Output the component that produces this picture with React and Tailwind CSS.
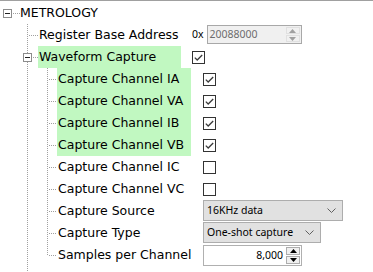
import React from 'react';

const LINE = '#a0a0a0';

function Guide({ kind }) {
  const dash = { stroke: LINE, strokeWidth: 1, strokeDasharray: '1 1', shapeRendering: 'crispEdges' };
  if (kind === 'root') {
    return (
      <svg width="20" height="22" className="shrink-0 block">
        <rect x="3.5" y="7.5" width="8" height="8" fill="#fff" stroke="#8c8c8c" shapeRendering="crispEdges" />
        <line x1="5" y1="11.5" x2="10" y2="11.5" stroke="#222" shapeRendering="crispEdges" />
        <line x1="13" y1="11.5" x2="20" y2="11.5" {...dash} />
      </svg>
    );
  }
  if (kind === 'l1') {
    return (
      <svg width="38" height="22" className="shrink-0 block">
        <line x1="27.5" y1="0" x2="27.5" y2="22" {...dash} />
        <line x1="29" y1="11.5" x2="38" y2="11.5" {...dash} />
      </svg>
    );
  }
  if (kind === 'l1open') {
    return (
      <svg width="38" height="22" className="shrink-0 block">
        <line x1="27.5" y1="0" x2="27.5" y2="7" {...dash} />
        <line x1="27.5" y1="16" x2="27.5" y2="22" {...dash} />
        <rect x="23.5" y="7.5" width="8" height="8" fill="#fff" stroke="#8c8c8c" shapeRendering="crispEdges" />
        <line x1="25" y1="11.5" x2="30" y2="11.5" stroke="#222" shapeRendering="crispEdges" />
        <line x1="33" y1="11.5" x2="38" y2="11.5" {...dash} />
      </svg>
    );
  }
  if (kind === 'l2') {
    return (
      <svg width="57" height="22" className="shrink-0 block">
        <line x1="27.5" y1="0" x2="27.5" y2="22" {...dash} />
        <line x1="47.5" y1="0" x2="47.5" y2="22" {...dash} />
        <line x1="49" y1="11.5" x2="57" y2="11.5" {...dash} />
      </svg>
    );
  }
  // l2last
  return (
    <svg width="57" height="22" className="shrink-0 block">
      <line x1="27.5" y1="0" x2="27.5" y2="22" {...dash} />
      <line x1="47.5" y1="0" x2="47.5" y2="12" {...dash} />
      <line x1="49" y1="11.5" x2="57" y2="11.5" {...dash} />
    </svg>
  );
}

function Checkbox({ checked }) {
  return (
    <div className="w-[13px] h-[13px] border border-[#333333] bg-white flex items-center justify-center shrink-0">
      {checked && (
        <svg width="11" height="11" viewBox="0 0 11 11">
          <polyline points="1.8,5.6 4.2,8 9.2,3" fill="none" stroke="#3a3a3a" strokeWidth="1.3" />
        </svg>
      )}
    </div>
  );
}

function Chevron() {
  return (
    <svg width="9" height="5" viewBox="0 0 9 5">
      <polyline points="0.5,0.5 4.5,4.5 8.5,0.5" fill="none" stroke="#606060" strokeWidth="1" />
    </svg>
  );
}

function Spinner({ disabled }) {
  const c = disabled ? '#a0a0a0' : '#000';
  return (
    <div className="flex flex-col w-[15px] h-full py-[1px] pr-[1px] gap-[1px]">
      <div className={`flex-1 flex items-center justify-center border ${disabled ? 'border-[#e0e0e0] bg-[#f0f0f0]' : 'border-[#adadad] bg-[#f0f0f0]'}`}>
        <svg width="7" height="4" viewBox="0 0 7 4"><polygon points="0,4 3.5,0 7,4" fill={c} /></svg>
      </div>
      <div className={`flex-1 flex items-center justify-center border ${disabled ? 'border-[#e0e0e0] bg-[#f0f0f0]' : 'border-[#adadad] bg-[#f0f0f0]'}`}>
        <svg width="7" height="4" viewBox="0 0 7 4"><polygon points="0,0 7,0 3.5,4" fill={c} /></svg>
      </div>
    </div>
  );
}

const labelFont = "font-['DejaVu_Sans',sans-serif] text-[12.5px] text-black";
const valFont = "font-['Noto_Sans',sans-serif] text-[10.5px]";

function Row({ kind, label, green, children, level }) {
  const w = level === 1 ? 'w-[143px]' : 'w-[134px]';
  const pad = level === 1 ? 'pl-[11px]' : 'pl-[12px]';
  return (
    <div className="flex h-[22px]">
      <Guide kind={kind} />
      <div className={`${w} shrink-0 h-full pl-[1px] leading-[22px] whitespace-nowrap overflow-hidden ${green ? 'bg-[#c1f8c1]' : ''} ${labelFont}`}>
        {label}
      </div>
      <div className={`flex h-full ${pad}`}>{children}</div>
    </div>
  );
}

export default function App() {
  return (
    <div className="w-[373px] h-[272px] bg-white border-t border-[#a0a0a0] overflow-hidden pt-[1px]">
      <div className="flex h-[22px]">
        <Guide kind="root" />
        <div className={`leading-[22px] ${labelFont}`}>METROLOGY</div>
      </div>

      <Row kind="l1" level={1} label="Register Base Address">
        <div className="flex items-start pt-[1px]">
          <span className={`${valFont} text-black leading-[19px] mr-[3px]`}>0x</span>
          <div className="w-[95px] h-[19px] border border-[#a8a8a8] bg-[#f0f0f0] flex">
            <div className={`flex-1 pl-[2px] leading-[17px] text-[#6d6d6d] ${valFont}`}>20088000</div>
            <Spinner disabled />
          </div>
        </div>
      </Row>

      <Row kind="l1open" level={1} label="Waveform Capture" green>
        <div className="flex items-center"><Checkbox checked /></div>
      </Row>

      {[
        ['Capture Channel IA', true],
        ['Capture Channel VA', true],
        ['Capture Channel IB', true],
        ['Capture Channel VB', true],
      ].map(([l, c]) => (
        <Row key={l} kind="l2" level={2} label={l} green>
          <div className="flex items-center"><Checkbox checked={c} /></div>
        </Row>
      ))}
      {['Capture Channel IC', 'Capture Channel VC'].map((l) => (
        <Row key={l} kind="l2" level={2} label={l}>
          <div className="flex items-center"><Checkbox checked={false} /></div>
        </Row>
      ))}

      <Row kind="l2" level={2} label="Capture Source">
        <div className="flex items-start">
          <div className="w-[140px] h-[21px] border border-[#adadad] bg-[#e1e1e1] flex items-center justify-between pl-[3px] pr-[6px]">
            <span className={`${valFont} text-black`}>16KHz data</span>
            <Chevron />
          </div>
        </div>
      </Row>

      <Row kind="l2" level={2} label="Capture Type">
        <div className="flex items-start">
          <div className="w-[118px] h-[21px] border border-[#adadad] bg-[#e1e1e1] flex items-center justify-between pl-[3px] pr-[6px]">
            <span className={`${valFont} text-black`}>One-shot capture</span>
            <Chevron />
          </div>
        </div>
      </Row>

      <Row kind="l2last" level={2} label="Samples per Channel">
        <div className="flex items-start pt-[1px]">
          <div className="w-[99px] h-[21px] border border-[#b0b0b0] bg-white flex">
            <div className={`flex-1 text-right pr-[3px] leading-[19px] text-black ${valFont}`}>8,000</div>
            <Spinner />
          </div>
        </div>
      </Row>

      <div className="flex h-[22px]">
        <svg width="38" height="22" className="shrink-0 block">
          <line x1="27.5" y1="0" x2="27.5" y2="22" stroke={LINE} strokeWidth="1" strokeDasharray="1 1" shapeRendering="crispEdges" />
        </svg>
      </div>
    </div>
  );
}
